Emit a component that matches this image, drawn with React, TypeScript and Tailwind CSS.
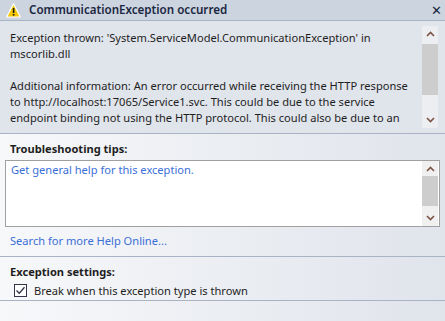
import React from "react";

function Arrow({ up }: { up?: boolean }) {
  return (
    <svg width="9" height="6" viewBox="0 0 9 6" className="block">
      {up ? (
        <path d="M1 5 L4.5 1.5 L8 5" stroke="#7b5444" strokeWidth="1.6" fill="none" />
      ) : (
        <path d="M1 1 L4.5 4.5 L8 1" stroke="#7b5444" strokeWidth="1.6" fill="none" />
      )}
    </svg>
  );
}

function ScrollBar({ thumbTop, thumbH, className }: { thumbTop: number; thumbH: number; className: string }) {
  return (
    <div className={"relative w-[16px] shrink-0 " + className}>
      <div className="absolute left-0 right-0 top-[5px] flex justify-center">
        <Arrow up />
      </div>
      <div className="absolute left-0 right-0 bg-[#cdcdcd]" style={{ top: thumbTop, height: thumbH }} />
      <div className="absolute left-0 right-0 bottom-[5px] flex justify-center">
        <Arrow />
      </div>
    </div>
  );
}

export default function App() {
  return (
    <div
      className="w-[445px] h-[321px] overflow-hidden flex flex-col text-[11.1px] leading-[16px] text-[#1e1e1e]"
      style={{ fontFamily: '"Segoe UI", "Noto Sans", "Open Sans", sans-serif' }}
    >
      {/* Title bar */}
      <div className="h-[21px] shrink-0 flex items-center bg-[#ccd4e0] border-b border-[#a8b3c5] pl-[6px] pr-[3px]">
        <svg width="15" height="15" viewBox="0 0 15 15" className="shrink-0">
          <path d="M7.5 0.8 L14.3 14 L0.7 14 Z" fill="#f6c700" stroke="#ffffff" strokeWidth="1.2" strokeLinejoin="round" />
          <rect x="6.8" y="5" width="1.6" height="5" fill="#1a1a1a" />
          <rect x="6.8" y="11" width="1.6" height="1.6" fill="#1a1a1a" />
        </svg>
        <span className="ml-[8px] text-[11.6px] font-semibold text-[#1b2740]">CommunicationException occurred</span>
        <span className="ml-auto text-[#1b2740] text-[13px] leading-none">✕</span>
      </div>

      {/* Upper panel */}
      <div className="h-[113px] shrink-0 flex bg-[#e0e4eb] border-b border-[#a8b3c5] overflow-hidden">
        <div className="flex-1 pl-[10px] pt-[9px] pr-[8px] overflow-hidden">
          <p>Exception thrown: 'System.ServiceModel.CommunicationException' in mscorlib.dll</p>
          <p className="mt-[16px]">
            Additional information: An error occurred while receiving the HTTP response to http://localhost:17065/Service1.svc. This could be due to the service endpoint binding not using the HTTP protocol. This could also be due to an
          </p>
        </div>
        <ScrollBar className="mt-[5px] mb-[5px] mr-[7px] bg-[#eceef2]" thumbTop={18} thumbH={51} />
      </div>

      {/* Lower panel */}
      <div className="flex-1 flex flex-col bg-gradient-to-r from-[#f7f8fa] to-[#e0e4eb]">
        <div className="px-[10px] pt-[7px] h-[26px] font-bold text-[#1e1e1e]">Troubleshooting tips:</div>
        <div className="mx-[5px] h-[67px] flex bg-white border border-[#a0a0a0]">
          <div className="flex-1 pl-[5px] pt-[1px] text-[#3a6fd8]">Get general help for this exception.</div>
          <ScrollBar className="h-full bg-[#f0f0f0] mr-[1px]" thumbTop={15} thumbH={30} />
        </div>
        <div className="px-[10px] pt-[6px] h-[30px] text-[#3a6fd8] border-b border-[#a8b3c5]">Search for more Help Online...</div>
        <div className="px-[10px] pt-[7px] h-[24px] font-bold">Exception settings:</div>
        <div className="flex items-center pl-[14px] h-[20px] border-b border-[#a8b3c5]">
          <div className="w-[13px] h-[13px] border border-[#33334a] bg-white flex items-center justify-center">
            <svg width="11" height="11" viewBox="0 0 11 11">
              <path d="M1.5 5.5 L4.3 8.3 L9.5 2.3" stroke="#33334a" strokeWidth="1.3" fill="none" />
            </svg>
          </div>
          <span className="ml-[7px]">Break when this exception type is thrown</span>
        </div>
      </div>
    </div>
  );
}
